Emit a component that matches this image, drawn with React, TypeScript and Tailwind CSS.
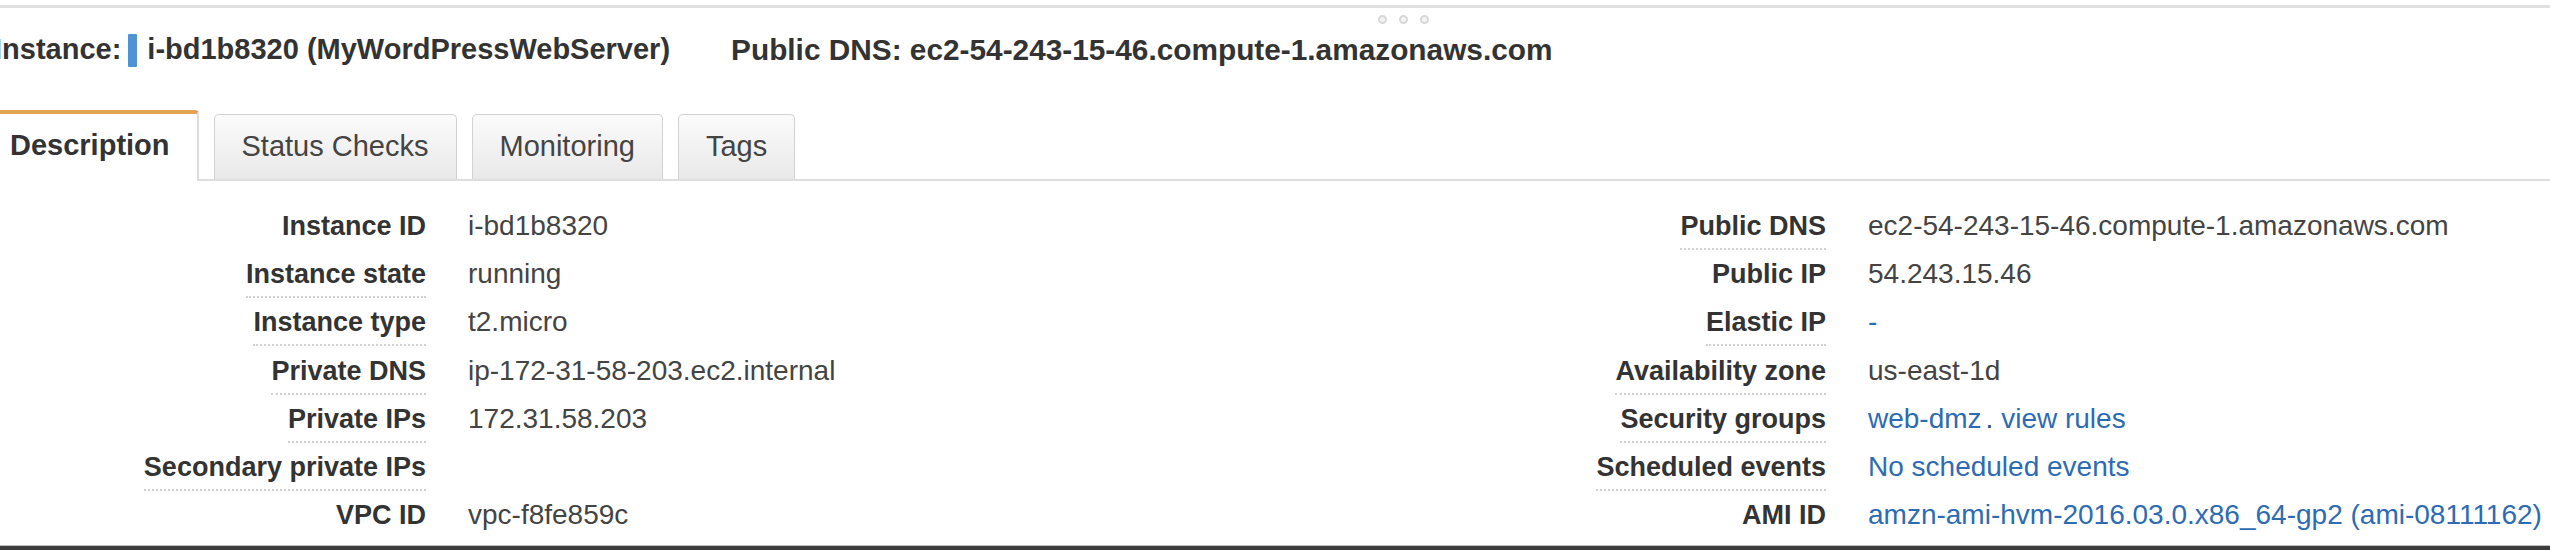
import React from "react";

type Cell = { label: string; value: React.ReactNode; dotted: boolean };

const link = "text-[#2d6cb3]";

const left: Cell[] = [
  { label: "Instance ID", value: "i-bd1b8320", dotted: false },
  { label: "Instance state", value: "running", dotted: true },
  { label: "Instance type", value: "t2.micro", dotted: true },
  { label: "Private DNS", value: "ip-172-31-58-203.ec2.internal", dotted: true },
  { label: "Private IPs", value: "172.31.58.203", dotted: true },
  { label: "Secondary private IPs", value: "", dotted: true },
  { label: "VPC ID", value: "vpc-f8fe859c", dotted: false },
];

const right: Cell[] = [
  { label: "Public DNS", value: "ec2-54-243-15-46.compute-1.amazonaws.com", dotted: true },
  { label: "Public IP", value: "54.243.15.46", dotted: false },
  { label: "Elastic IP", value: <span className={link}>-</span>, dotted: true },
  { label: "Availability zone", value: "us-east-1d", dotted: true },
  {
    label: "Security groups",
    value: (
      <span>
        <span className={link}>web-dmz</span>
        <span className="ml-[4px] text-[#2d4f7a]">. </span>
        <span className={link}>view rules</span>
      </span>
    ),
    dotted: true,
  },
  { label: "Scheduled events", value: <span className={link}>No scheduled events</span>, dotted: true },
  {
    label: "AMI ID",
    value: <span className={link}>amzn-ami-hvm-2016.03.0.x86_64-gp2 (ami-08111162)</span>,
    dotted: false,
  },
];

function Group({ rows, className }: { rows: Cell[]; className: string }) {
  return (
    <div className={"grid grid-cols-[426px_1fr] gap-x-[42px] auto-rows-[48.2px] " + className}>
      {rows.map((r) => (
        <React.Fragment key={r.label}>
          <div className="flex justify-end items-start">
            <span
              className={
                "mt-[9px] inline-block leading-[30px] pb-[7px] font-bold text-[27px] text-[#333] whitespace-nowrap " +
                (r.dotted ? "border-b-2 border-dotted border-[#d0d0d0]" : "border-b-2 border-transparent")
              }
            >
              {r.label}
            </span>
          </div>
          <div className="pt-[9px] leading-[30px] text-[28px] text-[#444] whitespace-nowrap">{r.value}</div>
        </React.Fragment>
      ))}
    </div>
  );
}

function Tab({ label }: { label: string }) {
  return (
    <div className="h-[65px] px-[27px] flex items-center rounded-t-[5px] border border-b-0 border-[#d2d2d2] bg-gradient-to-b from-[#fbfbfb] to-[#e9e9e9] text-[29px] text-[#444] whitespace-nowrap">
      {label}
    </div>
  );
}

export default function App() {
  return (
    <div className="w-[2550px] h-[550px] overflow-hidden bg-white flex flex-col font-['Liberation_Sans',Arial,sans-serif]">
      <div className="h-[5px] shrink-0" />
      <div className="h-[3px] shrink-0 bg-[#e0e0e0]" />
      <div className="h-[22px] shrink-0 flex items-center pl-[1378px] gap-[12px]">
        <span className="w-[9px] h-[9px] rounded-full border-2 border-[#d8d8d8] bg-[#f4f4f4]" />
        <span className="w-[9px] h-[9px] rounded-full border-2 border-[#d8d8d8] bg-[#f4f4f4]" />
        <span className="w-[9px] h-[9px] rounded-full border-2 border-[#d8d8d8] bg-[#f4f4f4]" />
      </div>
      <div className="h-[40px] shrink-0 flex items-center ml-[-6px] text-[29px] font-bold text-[#333] whitespace-nowrap">
        <span>Instance:</span>
        <span className="ml-[7px] mr-[10px] inline-block w-[9px] h-[33px] bg-[#4f93d6] rounded-[1px]" />
        <span>i-bd1b8320 (MyWordPressWebServer)</span>
        <span className="ml-[61px] text-[29.8px]">Public DNS: ec2-54-243-15-46.compute-1.amazonaws.com</span>
      </div>
      <div className="h-[40px] shrink-0" />
      <div className="shrink-0 ml-[-19px] flex items-end gap-[15px] border-b-2 border-[#dedede]">
        <div className="h-[71px] -mb-[2px] px-[27px] pb-[4px] flex items-center bg-white border-t-[4px] border-t-[#e2a452] border-x-2 border-x-[#dcdcdc] rounded-t-[4px] text-[29px] font-bold text-[#333] whitespace-nowrap">
          Description
        </div>
        <Tab label="Status Checks" />
        <Tab label="Monitoring" />
        <Tab label="Tags" />
      </div>
      <div className="pt-[21px] flex">
        <Group rows={left} className="w-[1400px] shrink-0" />
        <Group rows={right} className="flex-1" />
      </div>
      <div className="mt-auto shrink-0 h-[1px] bg-[#c4c4c4]" />
      <div className="shrink-0 h-[4px] bg-[#3d3d3d]" />
    </div>
  );
}
